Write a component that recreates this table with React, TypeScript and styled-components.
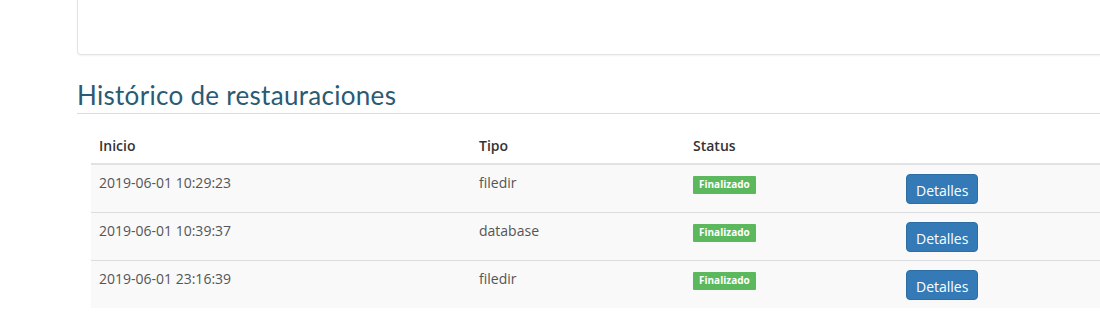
import React from "react";
import styled, { createGlobalStyle } from "styled-components";

const GlobalStyle = createGlobalStyle`
  html, body {
    margin: 0;
    padding: 0;
    background: #ffffff;
    overflow: hidden;
  }
  body {
    font-family: "Open Sans", "Liberation Sans", Arial, sans-serif;
    font-size: 14px;
    color: #333;
  }
`;

const Page = styled.div`
  width: 100%;
  padding-left: 77px;
  box-sizing: border-box;
  overflow: hidden;
`;

const Panel = styled.div`
  height: 54px;
  margin-right: -8px;
  border: 1px solid #e3e3e3;
  border-top: none;
  border-radius: 0 0 4px 4px;
  box-shadow: 0 1px 2px rgba(0, 0, 0, 0.05);
  background: #fff;
`;

const Title = styled.h2`
  margin: 24px 0 0;
  padding-bottom: 2px;
  border-bottom: 1px solid #dcdcdc;
  font-family: "Lato", "Open Sans", sans-serif;
  font-weight: 400;
  font-size: 26px;
  line-height: 32px;
  color: #2b5a73;
  letter-spacing: 0.3px;
`;

const Table = styled.table`
  margin: 14px 0 0 14px;
  width: calc(100% - 14px);
  border-collapse: collapse;
  table-layout: fixed;
`;

const Th = styled.th<{ $w?: number }>`
  box-sizing: border-box;
  width: ${(p) => (p.$w ? `${p.$w}px` : "auto")};
  text-align: left;
  font-weight: 600;
  color: #333;
  padding: 8px 8px 7px;
  line-height: 20px;
  border-bottom: 2px solid #e2e2e2;
`;

const Row = styled.tr`
  background: #f9f9f9;
  border-bottom: 1px solid #dddddd;
  &:last-child {
    border-bottom: none;
  }
`;

const Td = styled.td`
  height: 31px;
  padding: 8px;
  vertical-align: top;
  line-height: 20px;
  color: #555;
`;

const Badge = styled.span`
  display: inline-block;
  vertical-align: top;
  margin-top: 3px;
  padding: 2px 6px 3px;
  background: #5cb85c;
  color: #fff;
  font-size: 10px;
  font-weight: 700;
  line-height: 13px;
  border-radius: 1px;
`;

const DetailsButton = styled.button`
  vertical-align: top;
  margin-top: 1px;
  height: 30px;
  padding: 2px 9px 0;
  border: 1px solid #2e6da4;
  border-radius: 4px;
  background: #337ab7;
  color: #fff;
  font-family: "Open Sans", sans-serif;
  font-size: 14px;
  cursor: pointer;
`;

const restores = [
  { start: "2019-06-01 10:29:23", type: "filedir", status: "Finalizado" },
  { start: "2019-06-01 10:39:37", type: "database", status: "Finalizado" },
  { start: "2019-06-01 23:16:39", type: "filedir", status: "Finalizado" },
];

const App = () => {
  return (
    <Page>
      <GlobalStyle />
      <Panel />
      <Title>Histórico de restauraciones</Title>
      <Table>
        <thead>
          <tr>
            <Th $w={380}>Inicio</Th>
            <Th $w={214}>Tipo</Th>
            <Th $w={213}>Status</Th>
            <Th />
          </tr>
        </thead>
        <tbody>
          {restores.map((r) => (
            <Row key={r.start}>
              <Td>{r.start}</Td>
              <Td>{r.type}</Td>
              <Td>
                <Badge>{r.status}</Badge>
              </Td>
              <Td>
                <DetailsButton>Detalles</DetailsButton>
              </Td>
            </Row>
          ))}
        </tbody>
      </Table>
    </Page>
  );
};

export default App;
